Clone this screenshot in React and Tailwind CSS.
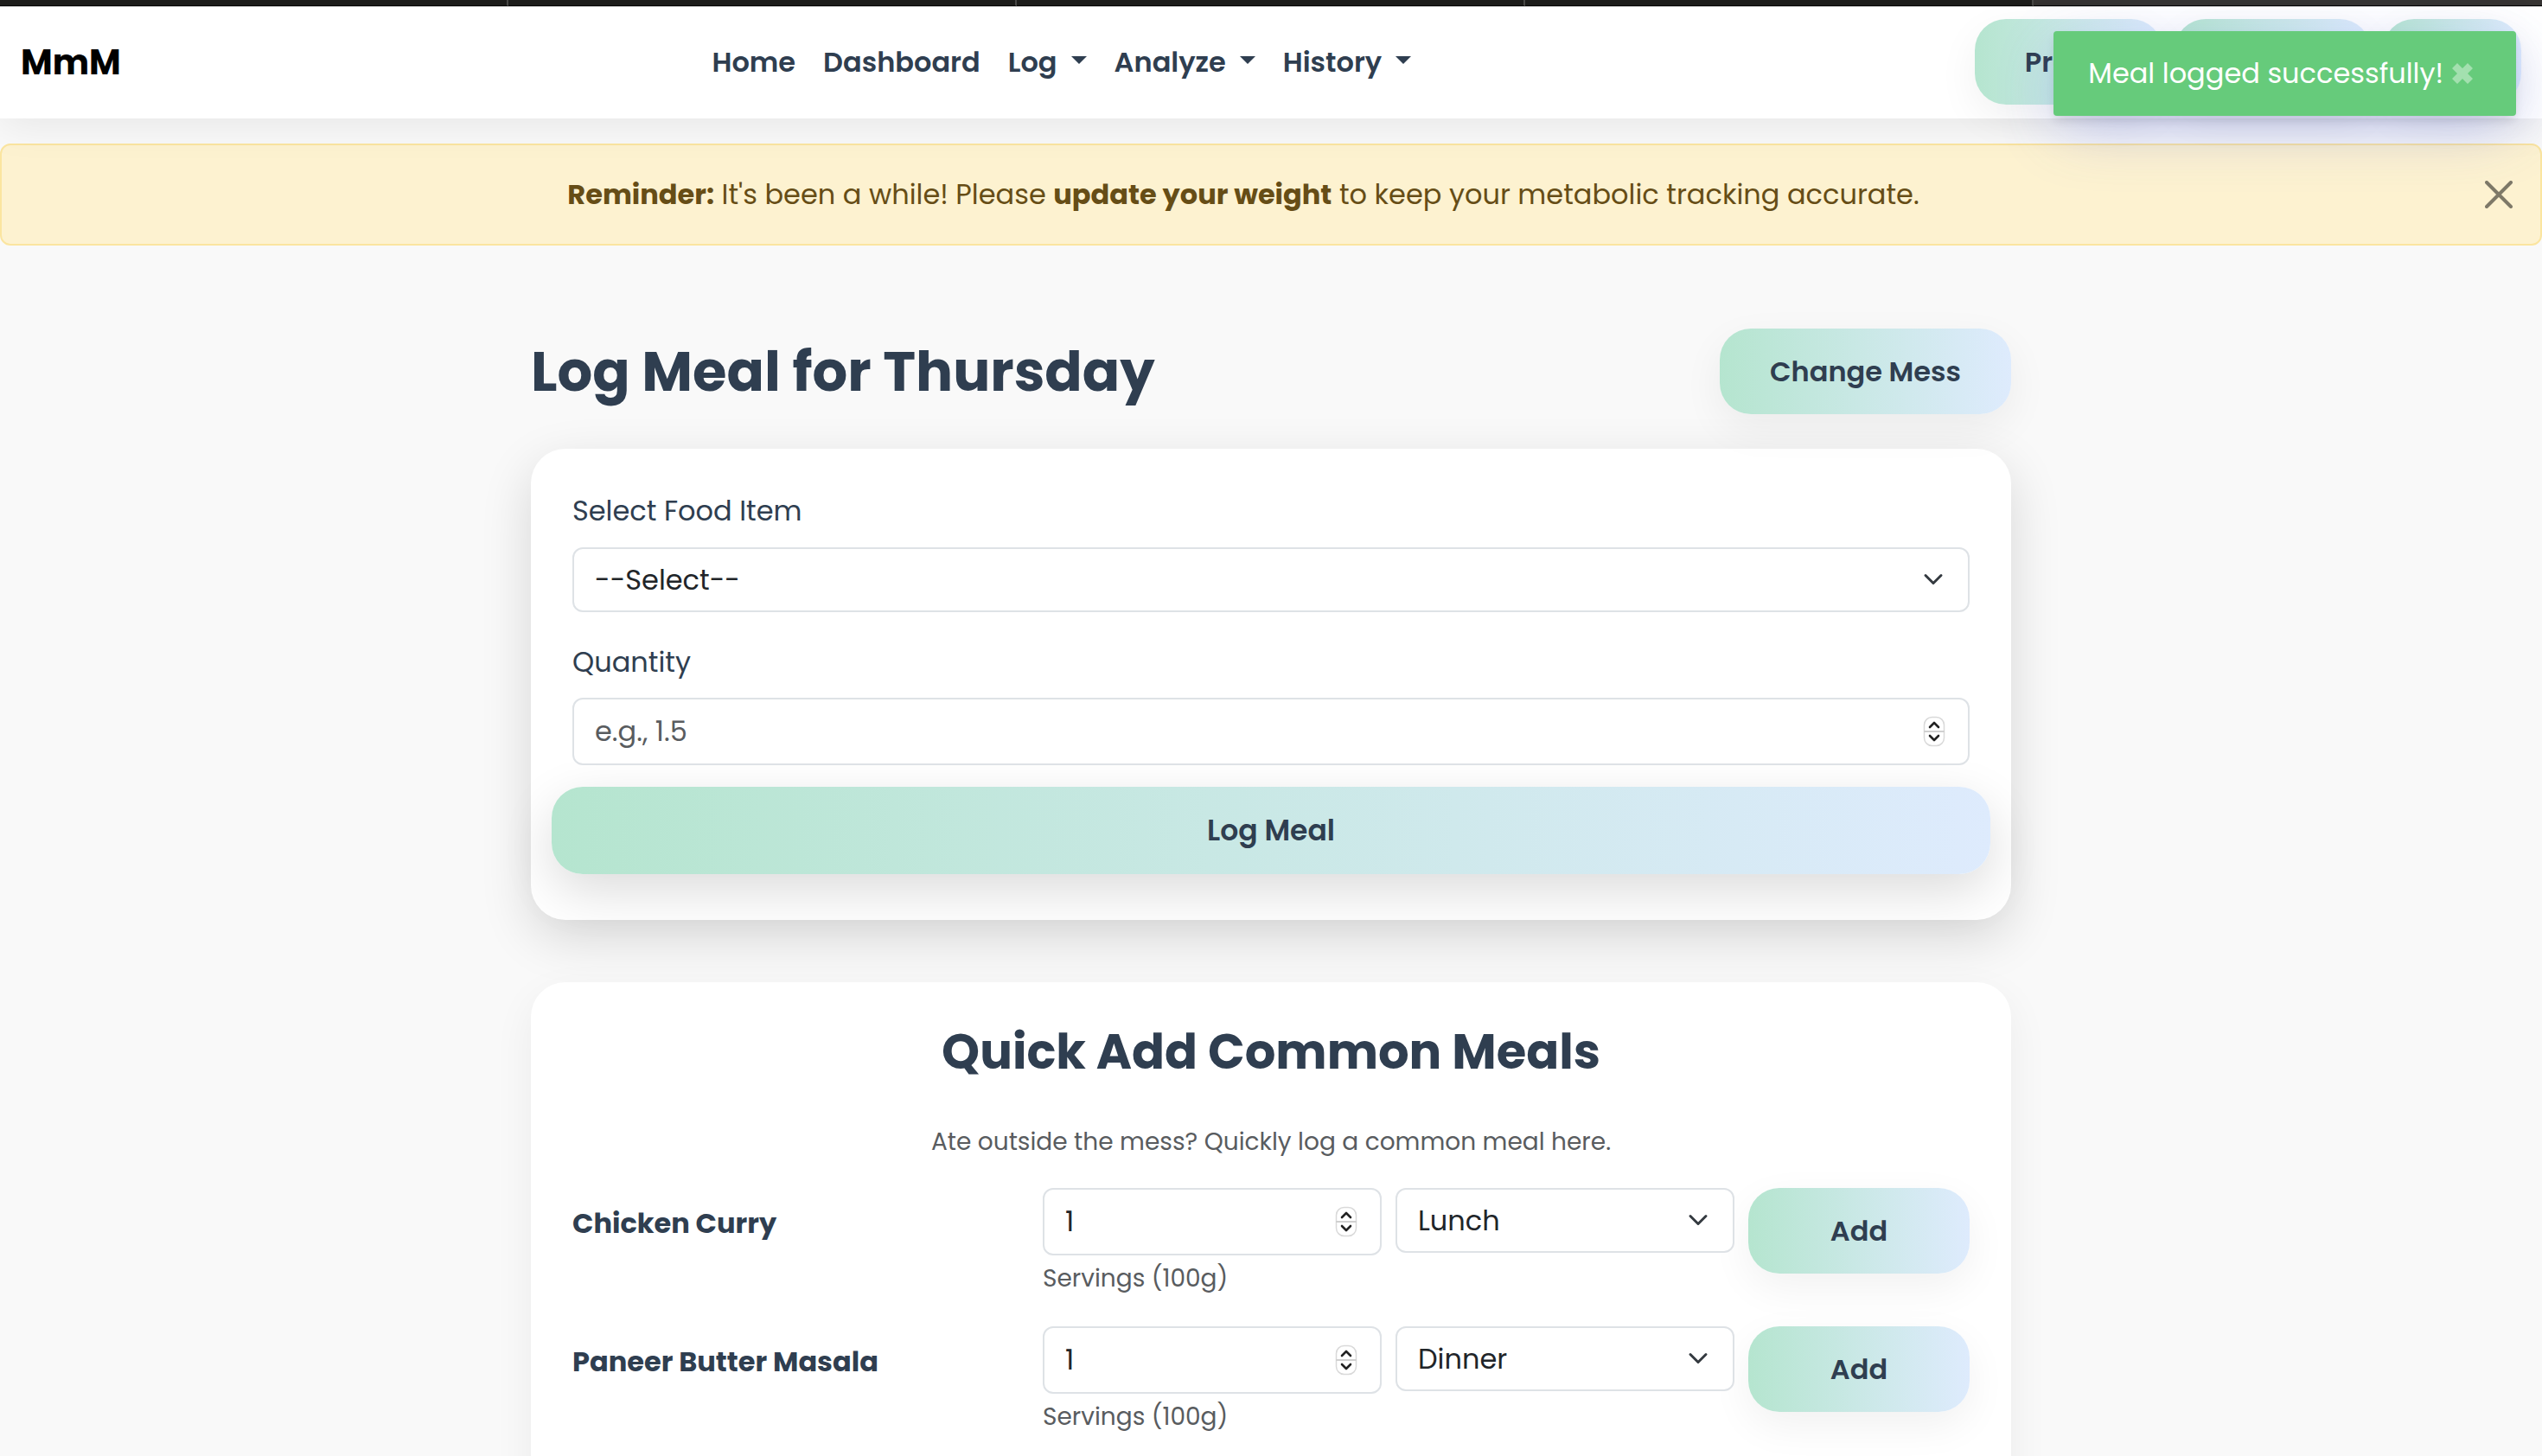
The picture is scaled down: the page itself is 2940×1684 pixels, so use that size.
import { Moon } from "lucide-react";

const BUTTON_BASE =
  "inline-flex items-center justify-center rounded-[36px] bg-linear-to-r from-[#b5e5cf] to-[#deebfd] px-[58px] font-semibold text-[#2f3e50]";
const BUTTON = `${BUTTON_BASE} h-[99px] text-[32px] shadow-[0_16px_48px_rgba(0,0,0,0.06)]`;
const FIELD =
  "w-full appearance-none rounded-xl border-2 border-[#dee2e6] bg-white px-6 text-[32px] text-[#212529] placeholder:text-[#595c5f]";

const TABS = [1, 2, 3, 4];
const LINKS = [
  { label: "Home" },
  { label: "Dashboard" },
  { label: "Log", menu: true },
  { label: "Analyze", menu: true },
  { label: "History", menu: true },
];
const MEALS = [
  { name: "Chicken Curry", id: "chicken", time: "Lunch" },
  { name: "Paneer Butter Masala", id: "paneer", time: "Dinner" },
];

function Select({ children, ...props }) {
  return (
    <div className="relative">
      <select className={`${FIELD} block h-[75px]`} {...props}>
        {children}
      </select>
      <svg viewBox="0 0 16 16" className="pointer-events-none absolute top-[25px] right-[30px] size-6" fill="none" stroke="#343a40" strokeWidth="2" strokeLinecap="round" strokeLinejoin="round">
        <path d="m2 5 6 6 6-6" />
      </svg>
    </div>
  );
}

function NumberField(props) {
  return (
    <div className="relative">
      <input type="number" className={`${FIELD} block h-[78px] [appearance:textfield]`} {...props} />
      <svg viewBox="0 0 26 36" className="pointer-events-none absolute top-[21px] right-[28px] h-9 w-[26px]" fill="none">
        <rect x="1.5" y="1.5" width="23" height="33" rx="9" fill="#fff" stroke="#d9d9d9" strokeWidth="1.5" />
        <path d="M1 18h24" stroke="#d0d0d0" strokeWidth="2" />
        <path d="m8 13 5-5 5 5M8 23l5 5 5-5" stroke="#222" strokeWidth="2.6" strokeLinecap="round" strokeLinejoin="round" />
      </svg>
    </div>
  );
}

function MealRow({ name, id, time }) {
  return (
    <form className="grid grid-cols-12 items-start gap-x-4">
      <strong className="col-span-4 flex h-[82px] items-center font-bold">{name}</strong>
      <div className="col-span-3">
        <NumberField id={id} defaultValue="1" />
        <label htmlFor={id} className="block h-[50px] pt-1.5 text-[28px] leading-[42px] text-[#595c5f]">
          Servings (100g)
        </label>
      </div>
      <div className="col-span-3">
        <Select aria-label={`${name} meal time`} defaultValue={time}>
          <option>Breakfast</option>
          <option>Lunch</option>
          <option>Dinner</option>
        </Select>
      </div>
      <button type="button" className={`${BUTTON} col-span-2`}>
        Add
      </button>
    </form>
  );
}

export default function App() {
  return (
    <div className="relative h-screen overflow-hidden bg-[#f9f9f9] font-['Poppins','Inter',sans-serif] text-[32px] leading-[48px] text-[#2f3e50]">
      <div className="grid h-2 grid-cols-5 border-b border-[#b5b5b5] bg-[#1e1e1c]">
        {TABS.map((t) => (
          <div key={t} className="border-r-2 border-b border-r-[#4a4a48] border-b-black" />
        ))}
        <div className="border-b border-black bg-[#373533]" />
      </div>

      <nav className="relative z-10 flex h-[129px] items-center bg-white px-6 pb-0.5 shadow-[0_8px_48px_rgba(0,0,0,0.08)]">
        <a href="#home" className="mr-8 text-[40px] font-bold text-black">
          MmM
        </a>
        <ul className="flex flex-1 justify-center gap-8 font-semibold">
          {LINKS.map((l) => (
            <li key={l.label}>
              <a href={`#${l.label.toLowerCase()}`} className="flex items-center gap-4">
                {l.label}
                {l.menu && (
                  <svg viewBox="0 0 18 9" className="mb-1 h-[9px] w-[18px] fill-[#2f3e50]">
                    <path d="M0 0h18L9 9Z" />
                  </svg>
                )}
              </a>
            </li>
          ))}
        </ul>
        <div className="flex gap-[14px]">
          <a href="#profile" className={BUTTON}>Profile</a>
          <a href="#logout" className={BUTTON}>Logout</a>
          <button type="button" aria-label="Toggle theme" className={BUTTON}>
            <Moon className="size-11" />
          </button>
        </div>
      </nav>

      <div role="alert" className="mt-[29px] flex h-[118px] items-center rounded-xl border-2 border-[#fbe5a0] bg-[#fdf2d0] px-8 text-[#664d16]">
        <p className="flex-1 text-center">
          <strong className="font-bold">Reminder:</strong> It's been a while! Please{" "}
          <a href="#weight" className="font-bold">update your weight</a> to keep your metabolic tracking accurate.
        </p>
        <button type="button" aria-label="Close" className="ml-8">
          <svg viewBox="0 0 32 32" className="size-8" stroke="#000" strokeOpacity="0.5" strokeWidth="4" strokeLinecap="round">
            <path d="m2 2 28 28M30 2 2 30" />
          </svg>
        </button>
      </div>

      <main className="mx-auto mt-24 w-full max-w-[1712px]">
        <header className="flex items-center justify-between">
          <h1 className="text-[64px] leading-[76px] font-bold">Log Meal for Thursday</h1>
          <button type="button" className={BUTTON}>Change Mess</button>
        </header>

        <form className="mt-10 rounded-[40px] bg-white px-12 pt-12 pb-[53px] shadow-[0_20px_60px_rgba(0,0,0,0.14)]">
          <label htmlFor="food" className="mb-[18px] block">Select Food Item</label>
          <Select id="food">
            <option>--Select--</option>
          </Select>
          <label htmlFor="quantity" className="mt-[34px] mb-[17px] block">Quantity</label>
          <NumberField id="quantity" placeholder="e.g., 1.5" />
          <div className="-mx-6 mt-[25px] flex">
            <button type="button" className={`${BUTTON_BASE} h-[101px] flex-1 text-[33px] shadow-[0_20px_60px_rgba(0,0,0,0.14)]`}>
              Log Meal
            </button>
          </div>
        </form>

        <section className="mt-[72px] rounded-[40px] bg-white px-12 pt-12 pb-24 shadow-[0_16px_48px_rgba(0,0,0,0.06)]">
          <h2 className="text-center text-[56px] leading-[66px] font-bold">Quick Add Common Meals</h2>
          <p className="mt-[50px] text-center text-[28px] leading-[42px] text-[#595c5f]">
            Ate outside the mess? Quickly log a common meal here.
          </p>
          <div className="mt-8 flex flex-col gap-8">
            {MEALS.map((m) => (
              <MealRow key={m.id} {...m} />
            ))}
          </div>
        </section>
      </main>

      <div role="status" className="absolute top-9 right-[30px] z-20 flex h-[98px] items-center gap-2.5 rounded bg-[#66cb7b] pr-[50px] pl-10 text-white shadow-[0_6px_12px_-2px_rgba(0,0,0,0.12),0_20px_72px_-8px_rgba(77,96,232,0.3)]">
        Meal logged successfully!
        <button type="button" aria-label="Dismiss">
          <svg viewBox="0 0 24 24" className="size-6 fill-white/40">
            <path d="m6 0 6 6 6-6 6 6-6 6 6 6-6 6-6-6-6 6-6-6 6-6-6-6z" />
          </svg>
        </button>
      </div>
    </div>
  );
}
